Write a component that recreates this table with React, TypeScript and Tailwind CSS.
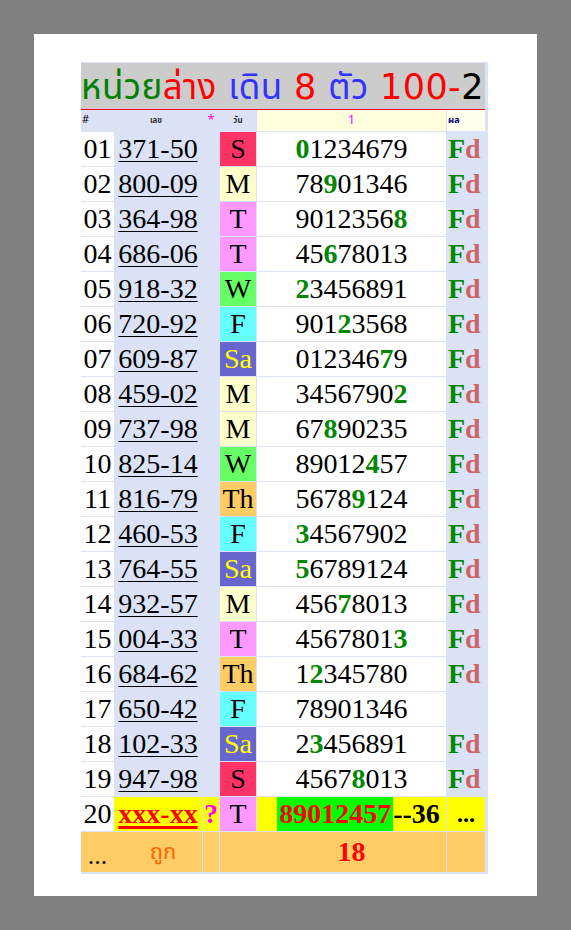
type Day = "S" | "M" | "T" | "W" | "Th" | "F" | "Sa";

type Row = {
  no: string;
  num: string;
  day: Day;
  digits: string;
  hit: number;
  fd: boolean;
};

const dayStyle: Record<Day, string> = {
  S: "bg-[#ff3366] text-black",
  M: "bg-[#ffffcc] text-black",
  T: "bg-[#ff99ff] text-black",
  W: "bg-[#66ff66] text-black",
  Th: "bg-[#ffcc66] text-black",
  F: "bg-[#66ffff] text-black",
  Sa: "bg-[#6666cc] text-[#ffff00]",
};

const rows: Row[] = [
  { no: "01", num: "371-50", day: "S", digits: "01234679", hit: 0, fd: true },
  { no: "02", num: "800-09", day: "M", digits: "78901346", hit: 2, fd: true },
  { no: "03", num: "364-98", day: "T", digits: "90123568", hit: 7, fd: true },
  { no: "04", num: "686-06", day: "T", digits: "45678013", hit: 2, fd: true },
  { no: "05", num: "918-32", day: "W", digits: "23456891", hit: 0, fd: true },
  { no: "06", num: "720-92", day: "F", digits: "90123568", hit: 3, fd: true },
  { no: "07", num: "609-87", day: "Sa", digits: "01234679", hit: 6, fd: true },
  { no: "08", num: "459-02", day: "M", digits: "34567902", hit: 7, fd: true },
  { no: "09", num: "737-98", day: "M", digits: "67890235", hit: 2, fd: true },
  { no: "10", num: "825-14", day: "W", digits: "89012457", hit: 5, fd: true },
  { no: "11", num: "816-79", day: "Th", digits: "56789124", hit: 4, fd: true },
  { no: "12", num: "460-53", day: "F", digits: "34567902", hit: 0, fd: true },
  { no: "13", num: "764-55", day: "Sa", digits: "56789124", hit: 0, fd: true },
  { no: "14", num: "932-57", day: "M", digits: "45678013", hit: 3, fd: true },
  { no: "15", num: "004-33", day: "T", digits: "45678013", hit: 7, fd: true },
  { no: "16", num: "684-62", day: "Th", digits: "12345780", hit: 1, fd: true },
  { no: "17", num: "650-42", day: "F", digits: "78901346", hit: -1, fd: false },
  { no: "18", num: "102-33", day: "Sa", digits: "23456891", hit: 1, fd: true },
  { no: "19", num: "947-98", day: "S", digits: "45678013", hit: 4, fd: true },
];

const serif = "font-['Liberation_Serif','Times_New_Roman',serif]";
const thai = "font-['Noto_Sans_Thai','Tahoma','Noto_Sans','DejaVu_Sans',sans-serif]";
const title = "font-['DejaVu_Sans','Tahoma','Noto_Sans_Thai',sans-serif]";

export default function App() {
  return (
    <div className="min-h-[930px] w-[571px] bg-[#808080] pl-[34px] pt-[34px]">
      <div className="h-[862px] w-[503px] bg-white pl-[47px] pt-[28px]">
        <div className={`w-[407px] bg-[#dbe2f6] pr-[3px] pt-px pb-[2px] ${serif}`}>
          {/* title */}
          <div
            className={`flex h-[47px] items-end overflow-hidden border-b border-[#ff0000] bg-[#cccccc] pb-[4px] text-[35px] leading-none tracking-[0.4px] whitespace-nowrap ${title}`}
          >
            <span className="text-[#008000]">หน่วย</span>
            <span className="text-[#ff0000]">ล่าง</span>
            <span className="text-[#3333ff]">&nbsp;เดิน</span>
            <span className="text-[#ff0000]">&nbsp;8</span>
            <span className="text-[#3333ff]">&nbsp;ตัว</span>
            <span className="text-[#ff0000]">&nbsp;100-</span>
            <span className="text-black">2</span>
          </div>

          {/* column header */}
          <div className={`flex h-[21px] items-stretch ${thai}`}>
            <div className="flex w-[33px] items-center pl-px text-[11px] text-black">#</div>
            <div className="flex w-[88px] items-center justify-center pr-[4px] text-[8px] font-bold text-[#333]">เลข</div>
            <div className="ml-px flex w-[16px] items-center justify-center text-[13px] text-[#ff00ff]">*</div>
            <div className="ml-px flex w-[36px] items-center justify-center text-[8px] font-bold text-[#333]">วัน</div>
            <div className="ml-px flex w-[189px] items-center justify-center bg-[#ffffdd] text-[13px] text-[#ff00ff]">1</div>
            <div className="ml-px flex w-[38px] items-center bg-[#ffffee] pl-px text-[9px] font-bold text-[#000080]">ผล</div>
          </div>

          {rows.map((r) => (
            <div key={r.no} className="mt-px flex h-[34px] items-stretch text-[28px] leading-[34px] text-black">
              <div className="w-[33px] bg-white text-center">{r.no}</div>
              <div className="w-[88px] text-center">
                <span className="underline decoration-1 underline-offset-[3px]">{r.num}</span>
              </div>
              <div className="ml-px w-[16px]" />
              <div className={`ml-px w-[36px] text-center ${dayStyle[r.day]}`}>{r.day}</div>
              <div className="ml-px w-[189px] bg-white text-center">
                {r.digits.split("").map((d, i) => (
                  <span key={i} className={i === r.hit ? "font-bold text-[#008800]" : ""}>
                    {d}
                  </span>
                ))}
              </div>
              <div className="ml-px w-[38px] pl-px font-bold">
                {r.fd && (
                  <>
                    <span className="text-[#008800]">F</span>
                    <span className="text-[#cc6666]">d</span>
                  </>
                )}
              </div>
            </div>
          ))}

          {/* pending row */}
          <div className="mt-px flex h-[34px] items-stretch text-[28px] leading-[34px]">
            <div className="w-[33px] bg-white text-center text-black">20</div>
            <div className="w-[88px] bg-[#ffff00] text-center font-bold text-[#ff0000]">
              <span className="underline decoration-[3px] underline-offset-[3px]">xxx-xx</span>
            </div>
            <div className="ml-px w-[16px] bg-[#ffff00] text-center font-bold text-[#ff00ff]">?</div>
            <div className="ml-px w-[36px] bg-[#ff99ff] text-center text-black">T</div>
            <div className="ml-px flex w-[189px] items-stretch justify-center bg-[#ffff00] pl-[14px] font-bold">
              <span className="bg-[#00ff00] px-[2px] text-[#ff0000]">89012457</span>
              <span className="text-black">--36</span>
            </div>
            <div className="ml-px w-[38px] bg-[#ffff00] text-center text-[24px] font-bold text-black">...</div>
          </div>

          {/* total row */}
          <div className="mt-px flex h-[40px] items-stretch">
            <div className="flex w-[33px] items-center justify-center bg-[#ffcc66] pt-[6px] text-[26px] text-black">...</div>
            <div className={`flex w-[88px] items-center justify-center bg-[#ffcc66] pl-[10px] text-[22px] text-[#ff6600] ${thai}`}>
              ถูก
            </div>
            <div className="ml-px w-[16px] bg-[#ffcc66]" />
            <div className="ml-px flex w-[226px] items-center bg-[#ffcc66]">
              <div className="w-[37px]" />
              <div className="flex-1 text-center text-[28px] font-bold text-[#ff0000]">18</div>
            </div>
            <div className="ml-px w-[38px] bg-[#ffcc66]" />
          </div>
        </div>
      </div>
    </div>
  );
}
